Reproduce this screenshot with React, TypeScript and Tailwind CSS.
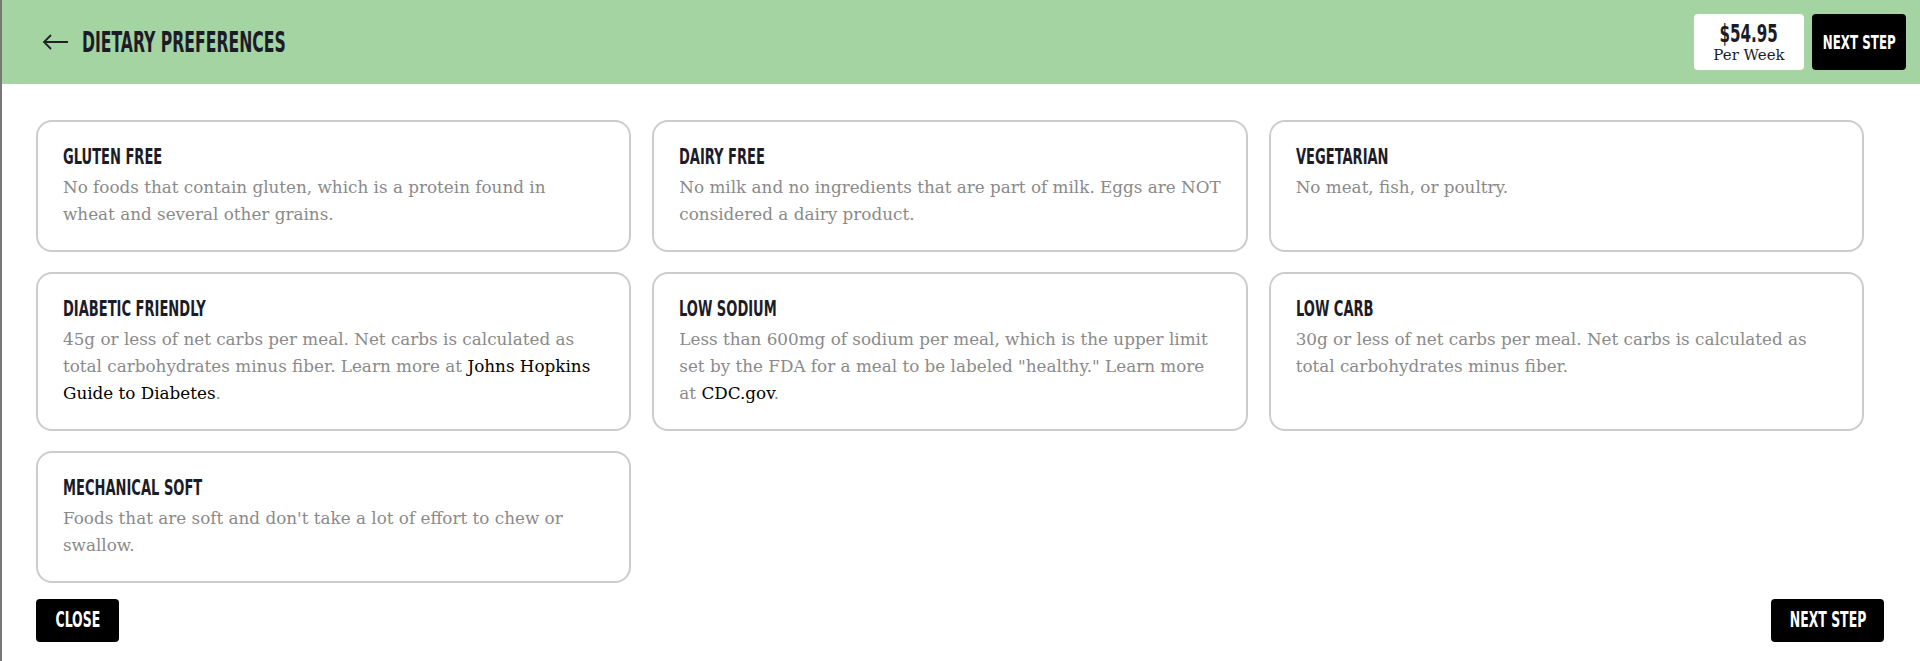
import React from 'react';

// Data for the diet option cards (lines split the way the page wraps them)
interface DietOption {
  title: string;
  lines: React.ReactNode[];
}

const display = "font-['DejaVu_Sans_Condensed','DejaVu_Sans',sans-serif] font-bold uppercase";
const serif = "font-['DejaVu_Serif',serif]";

const Link: React.FC<{ children: React.ReactNode }> = ({ children }) => <a className="text-black">{children}</a>;

const options: DietOption[] = [
  { title: 'Gluten Free', lines: ['No foods that contain gluten, which is a protein found in', 'wheat and several other grains.'] },
  { title: 'Dairy Free', lines: ['No milk and no ingredients that are part of milk. Eggs are NOT', 'considered a dairy product.'] },
  { title: 'Vegetarian', lines: ['No meat, fish, or poultry.'] },
  {
    title: 'Diabetic Friendly',
    lines: [
      '45g or less of net carbs per meal. Net carbs is calculated as',
      <>total carbohydrates minus fiber. Learn more at <Link>Johns Hopkins</Link></>,
      <><Link>Guide to Diabetes</Link>.</>,
    ],
  },
  {
    title: 'Low Sodium',
    lines: [
      'Less than 600mg of sodium per meal, which is the upper limit',
      'set by the FDA for a meal to be labeled "healthy." Learn more',
      <>at <Link>CDC.gov</Link>.</>,
    ],
  },
  { title: 'Low Carb', lines: ['30g or less of net carbs per meal. Net carbs is calculated as', 'total carbohydrates minus fiber.'] },
  { title: 'Mechanical Soft', lines: ["Foods that are soft and don't take a lot of effort to chew or", 'swallow.'] },
];

// condensed display text: squeeze the wide fallback face horizontally
const Squeeze: React.FC<{ children: React.ReactNode; className?: string }> = ({ children, className = '' }) => (
  <span className={`inline-block whitespace-nowrap scale-x-[0.66] ${className}`}>{children}</span>
);

const DietCard: React.FC<{ option: DietOption }> = ({ option }) => (
  <div className="rounded-2xl border-2 border-[#cccccc] bg-white px-[25px] pt-[21px] pb-[22px]">
    <h3 className={`${display} text-[22px] leading-[28px] text-[#1c1c28]`}>
      <Squeeze className="origin-left">{option.title}</Squeeze>
    </h3>
    <p className={`${serif} mt-[3px] text-[16.8px] leading-[27px] text-[#8a8a8a] whitespace-nowrap`}>
      {option.lines.map((l, i) => (
        <React.Fragment key={i}>
          {i > 0 && <br />}
          {l}
        </React.Fragment>
      ))}
    </p>
  </div>
);

const App: React.FC = () => {
  return (
    <div className="min-h-[661px] bg-white border-l-2 border-[#777777]">
      {/* header bar */}
      <div className="h-[84px] bg-[#a3d4a2] flex items-center justify-between pl-[40px] pr-[14px]">
        <div className="flex items-center gap-[13px]">
          <svg width="27" height="16" viewBox="0 0 27 16" fill="none" stroke="#222" strokeWidth="1.8">
            <path d="M26 8H2M9 1L2 8l7 7" />
          </svg>
          <h1 className={`${display} text-[29px] leading-none text-[#1c1c28]`}>
            <Squeeze className="origin-left !scale-x-[0.6]">Dietary Preferences</Squeeze>
          </h1>
        </div>
        <div className="flex items-center gap-2">
          <div className="w-[110px] h-[56px] bg-white rounded flex flex-col items-center justify-center pt-[2px]">
            <span className={`${display} text-[24px] leading-[24px] text-[#1c1c28]`}>
              <Squeeze className="!scale-x-[0.7]">$54.95</Squeeze>
            </span>
            <span className={`${serif} text-[15px] leading-[18px] text-[#1c1c28]`}>Per Week</span>
          </div>
          <button className={`${display} w-[94px] h-[56px] bg-black text-white rounded text-[20px] flex items-center justify-center`}>
            <Squeeze>Next Step</Squeeze>
          </button>
        </div>
      </div>

      {/* option grid */}
      <div className="pl-[34px] pr-[36px] pt-[36px]">
        <div className="grid grid-cols-3 gap-x-[21px] gap-y-[20px] pr-[20px]">
          {options.map(o => (
            <DietCard key={o.title} option={o} />
          ))}
        </div>
        <div className="flex justify-between pt-[16px]">
          <button className={`${display} w-[83px] h-[43px] bg-black text-white rounded text-[21px] flex items-center justify-center`}>
            <Squeeze>Close</Squeeze>
          </button>
          <button className={`${display} w-[113px] h-[43px] bg-black text-white rounded text-[21px] flex items-center justify-center`}>
            <Squeeze>Next Step</Squeeze>
          </button>
        </div>
      </div>
    </div>
  );
};

export default App;
